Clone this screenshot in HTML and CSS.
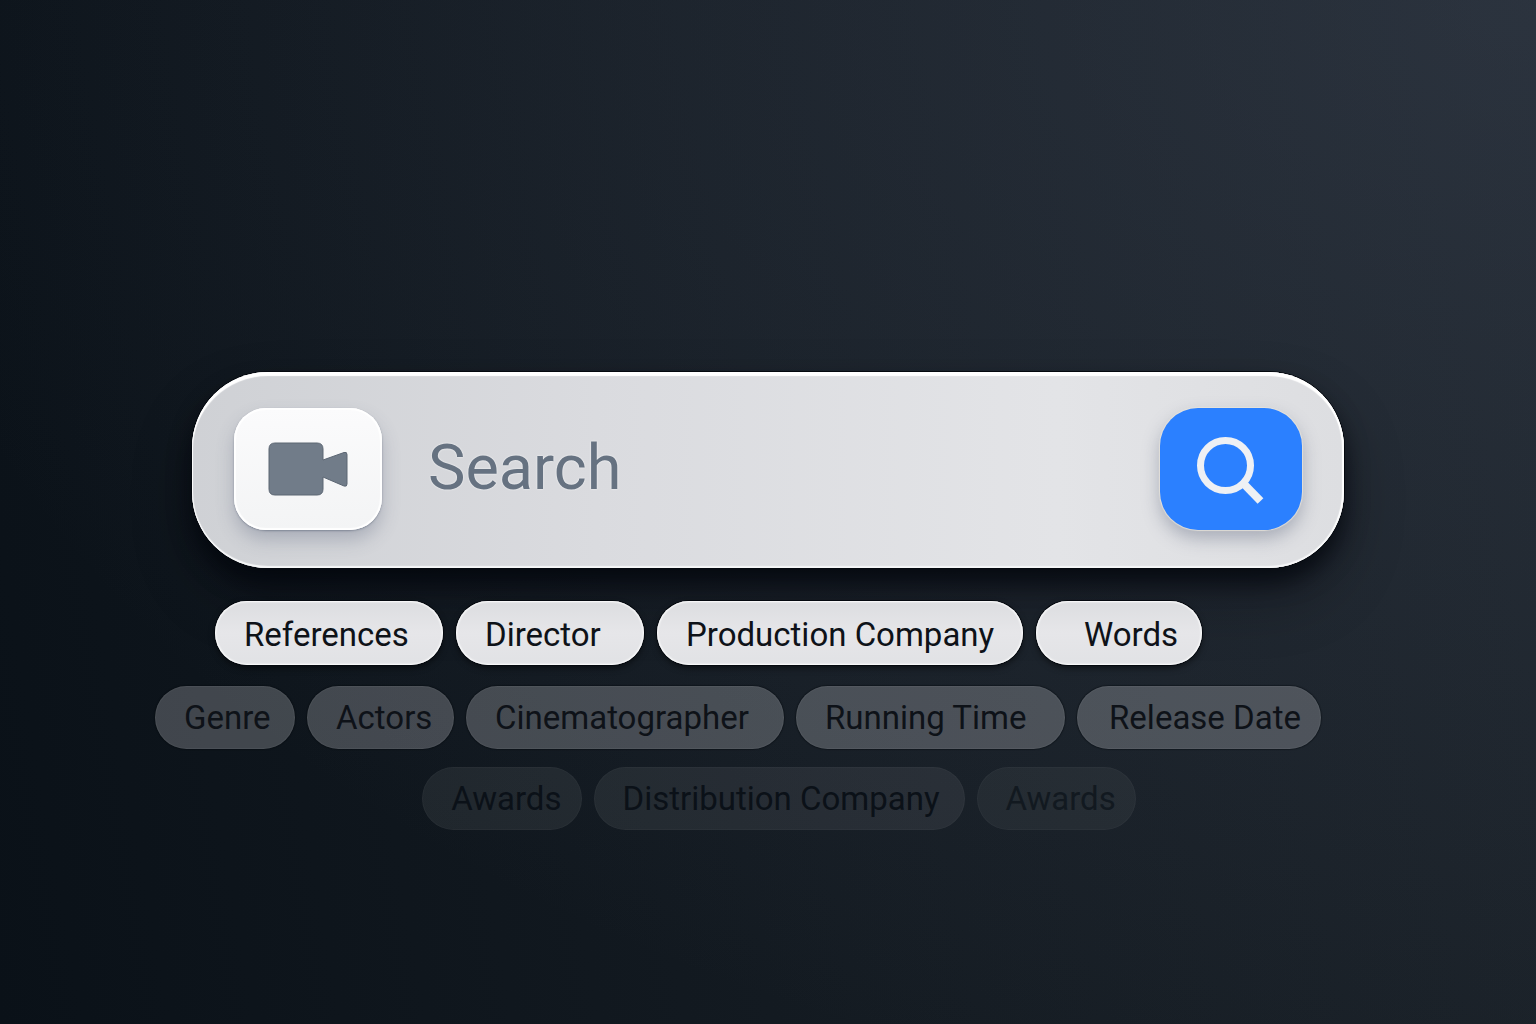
FILE: index.html
```html
<!DOCTYPE html>
<html lang="en">
<head>
    <meta charset="UTF-8">
    <meta name="viewport" content="width=device-width, initial-scale=1.0">
    <title>Film Search</title>
    <link rel="stylesheet" href="styles.css">
</head>
<body>

    <main class="search">
        <form class="search-bar" onsubmit="return false">
            <button type="button" class="tile media" aria-label="Video">
                <svg width="80" height="54" viewBox="0 0 80 54">
                    <path d="M7 1 H49 Q55 1 55 7 V18 L76 10.500 Q79 9.500 79 12.500 V42 Q79 45 76 44 L55 35 V47 Q55 53 49 53 H7 Q1 53 1 47 V7 Q1 1 7 1 Z"/>
                </svg>
            </button>
            <input type="text" class="search-input" placeholder="Search" aria-label="Search">
            <button type="submit" class="tile submit" aria-label="Search">
                <svg width="70" height="70" viewBox="0 0 70 70">
                    <circle cx="29.500" cy="31.500" r="25"/>
                    <path class="handle" d="M47 49 L64.500 67"/>
                </svg>
            </button>
        </form>

        <div class="chips">
            <div class="row row-first">
                <button type="button" class="chip references">References</button>
                <button type="button" class="chip director">Director</button>
                <button type="button" class="chip production">Production Company</button>
                <button type="button" class="chip words">Words</button>
            </div>
            <div class="row row-second">
                <button type="button" class="chip genre">Genre</button>
                <button type="button" class="chip actors">Actors</button>
                <button type="button" class="chip cinematographer">Cinematographer</button>
                <button type="button" class="chip running">Running Time</button>
                <button type="button" class="chip release">Release Date</button>
            </div>
            <div class="row row-third">
                <button type="button" class="chip awards">Awards</button>
                <button type="button" class="chip distribution">Distribution Company</button>
                <button type="button" class="chip awards faded">Awards</button>
            </div>
        </div>
    </main>

</body>
</html>
```
FILE: styles.css
```css
* {
    box-sizing: border-box;
}
body {
    font-family: Roboto, "Liberation Sans", sans-serif;
    background:
        radial-gradient(ellipse 110% 110% at 100% 0, rgba(86, 96, 118, 0.28), rgba(86, 96, 118, 0)),
        linear-gradient(80deg, #0a1118, #141b22 50%, #1b2229);
    min-height: 100vh;
    margin: 0;
}
button {
    border: none;
    cursor: pointer;
    font-family: inherit;
}
.search {
    padding-top: 372px;
}
.search-bar {
    display: flex;
    align-items: center;
    width: 75%;
    height: 196px;
    margin: 0 auto;
    padding: 0 42px 2px;
    border-radius: 76px;
    background: linear-gradient(90deg, #cfd1d5 0%, #dadbdf 35%, #e3e4e7 75%, #dddee1 100%);
    box-shadow: inset 0 4px 1px #fff, inset 0 -2px 1px #f6f7f8, inset 1px 0 1px #fff, inset -2px 0 1px #fff,
        0 0 0 1px #05090f, 0 14px 22px rgba(0, 4, 10, 0.7), 0 30px 60px rgba(0, 4, 10, 0.3);
}
.tile {
    display: flex;
    align-items: center;
    justify-content: center;
    height: 122px;
    padding: 0;
}
.media {
    width: 148px;
    border-radius: 32px;
    background: linear-gradient(#fbfbfc, #f3f4f5);
    box-shadow: inset 0 0 1px 2px #fff, 0 1px 2px rgba(80, 90, 110, 0.5), 0 10px 18px rgba(80, 90, 115, 0.3);
}
.media svg {
    fill: #717c89;
    stroke: #5c6673;
    stroke-width: 1;
}
.search-input {
    flex: 1;
    min-width: 0;
    padding: 0 46px 4px;
    border: none;
    outline: none;
    background: none;
    font-family: inherit;
    font-size: 63px;
    color: #5f6b7a;
}
.search-input::placeholder {
    color: #667281;
    opacity: 1;
    text-shadow: 0 0 2px #fff;
}
.submit {
    width: 142px;
    border-radius: 38px;
    background: #2b80ff;
    box-shadow: 0 0 1px 1px rgba(235, 230, 220, 0.8), 0 8px 18px rgba(80, 90, 115, 0.4);
}
.submit svg {
    fill: none;
    stroke: #eef0f4;
    stroke-width: 7;
}
.submit .handle {
    stroke-width: 8;
}
.chips {
    padding-top: 33px;
}
.row {
    display: flex;
    justify-content: center;
    gap: 12px;
    margin-bottom: 18px;
}
.row-first {
    gap: 13px;
    padding-right: 119px;
    margin-bottom: 21px;
}
.row-second {
    padding-right: 60px;
}
.row-third {
    padding-left: 22px;
}
.chip {
    height: 63px;
    padding: 0 20px 0 29px;
    border-radius: 32px;
    font-size: 33px;
    text-align: left;
    white-space: nowrap;
    color: #0e1218;
}
.row-first .chip {
    height: 64px;
    padding-top: 2px;
    background: linear-gradient(#dcdde0, #e6e6e9 50%, #e1e2e5);
    box-shadow: inset 0 0 2px 1px #fff, 0 0 0 1px #05090f, 0 3px 6px rgba(0, 0, 0, 0.5);
}
.row-second .chip {
    background: rgba(250, 250, 255, 0.22);
    box-shadow: inset 0 0 1px 1px rgba(255, 255, 255, 0.06), 0 0 1px 1px rgba(5, 9, 15, 0.4);
}
.row-third .chip {
    background: rgba(250, 250, 255, 0.07);
    box-shadow: inset 0 0 1px 1px rgba(255, 255, 255, 0.03);
    color: #0b1118;
}
.row-third .faded {
    background: rgba(250, 250, 255, 0.05);
    color: #121920;
}

/* chip widths */
.references {
    min-width: 228px;
}
.director {
    min-width: 188px;
}
.production {
    min-width: 366px;
}
.words {
    min-width: 166px;
    padding-left: 48px;
}
.genre {
    min-width: 140px;
}
.actors {
    min-width: 147px;
}
.cinematographer {
    min-width: 318px;
}
.running {
    min-width: 269px;
}
.release {
    min-width: 243px;
    padding-left: 32px;
}
.awards {
    min-width: 157px;
}
.distribution {
    min-width: 371px;
}
```
